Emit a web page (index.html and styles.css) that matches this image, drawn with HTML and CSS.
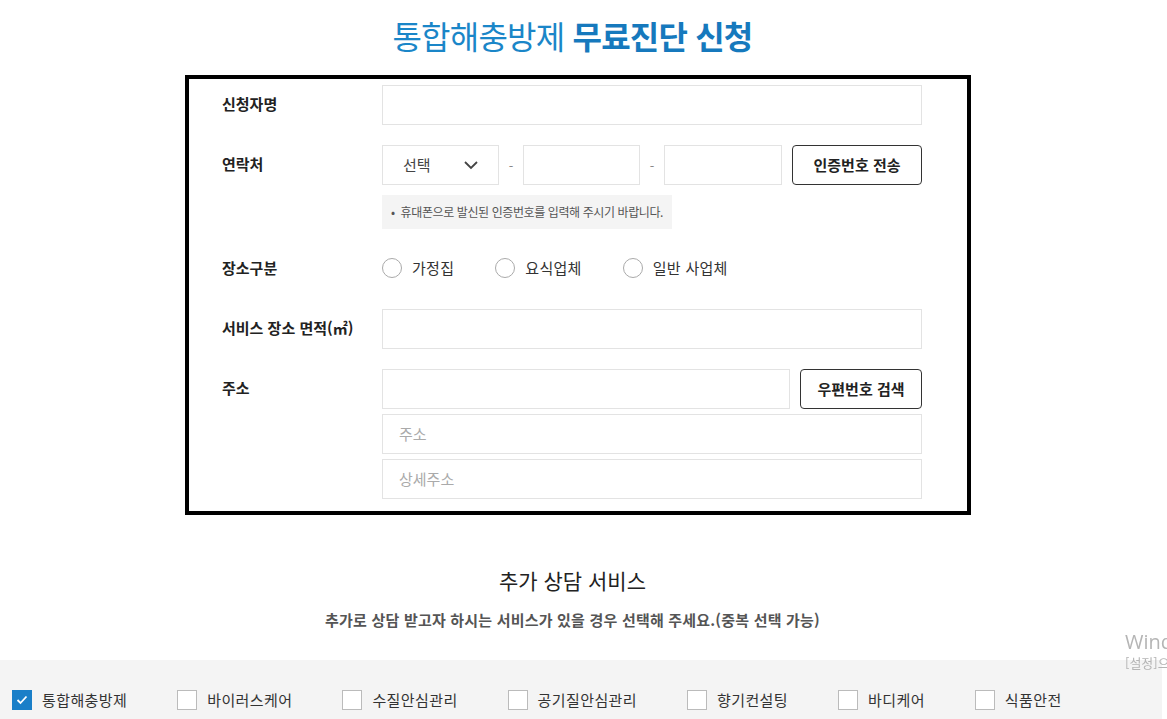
FILE: index.html
```html
<!DOCTYPE html>
<html lang="ko">
<head>
<meta charset="utf-8">
<link rel="stylesheet" href="styles.css">
</head>
<body>
<div class="page">
    <h1 class="title">통합해충방제 <b>무료진단 신청</b></h1>

    <div class="form-box">
        <div class="row">
            <div class="label">신청자명</div>
            <div class="field"><div class="input"></div></div>
        </div>

        <div class="row">
            <div class="label">연락처</div>
            <div class="field">
                <div class="tel">
                    <div class="input select">선택
                        <svg width="14" height="9" viewBox="0 0 14 9"><path d="M1 1l6 6 6-6" fill="none" stroke="#444" stroke-width="1.8"/></svg>
                    </div>
                    <span class="dash">-</span>
                    <div class="input tel-num"></div>
                    <span class="dash">-</span>
                    <div class="input tel-num last"></div>
                    <div class="btn btn-cert">인증번호 전송</div>
                </div>
                <div class="notice">• &nbsp;휴대폰으로 발신된 인증번호를 입력해 주시기 바랍니다.</div>
            </div>
        </div>

        <div class="row">
            <div class="label">장소구분</div>
            <div class="field radios">
                <label class="radio"><span class="circle"></span>가정집</label>
                <label class="radio"><span class="circle"></span>요식업체</label>
                <label class="radio"><span class="circle"></span>일반 사업체</label>
            </div>
        </div>

        <div class="row">
            <div class="label">서비스 장소 면적(㎡)</div>
            <div class="field"><div class="input"></div></div>
        </div>

        <div class="row">
            <div class="label">주소</div>
            <div class="field">
                <div class="zip">
                    <div class="input zip-input"></div>
                    <div class="btn btn-zip">우편번호 검색</div>
                </div>
                <div class="input sub">주소</div>
                <div class="input sub">상세주소</div>
            </div>
        </div>
    </div>

    <h2 class="sub-title">추가 상담 서비스</h2>
    <p class="sub-desc">추가로 상담 받고자 하시는 서비스가 있을 경우 선택해 주세요.(중복 선택 가능)</p>
</div>

<div class="services">
    <label class="check"><span class="box on"><svg width="12" height="10" viewBox="0 0 12 10"><path d="M1.5 5l3 3 6-6.5" fill="none" stroke="#fff" stroke-width="1.8"/></svg></span>통합해충방제</label>
    <label class="check"><span class="box"></span>바이러스케어</label>
    <label class="check"><span class="box"></span>수질안심관리</label>
    <label class="check"><span class="box"></span>공기질안심관리</label>
    <label class="check"><span class="box"></span>향기컨설팅</label>
    <label class="check"><span class="box"></span>바디케어</label>
    <label class="check"><span class="box"></span>식품안전</label>
</div>

<div class="win-mark">
    <div class="win-big">Windows 정품 인증</div>
    <div class="win-small">[설정]으로 이동하여 Windows를 정품 인증합니다.</div>
</div>
</body>
</html>
```

FILE: styles.css
```css
body { margin: 0; font-family: "Noto Sans CJK KR", "Noto Sans", sans-serif; color: #222; background: #fff; overflow: hidden; }
.page { width: 1145px; }

.title { margin: 0; padding-top: 12px; height: 63px; text-align: center; font-size: 32px; font-weight: 400; color: #1a86c8; letter-spacing: -0.8px; line-height: 46px; }
.title b { font-weight: 700; color: #1679bd; }

.form-box { width: 786px; margin-left: 185px; border: 4px solid #000; padding: 6px 45px 12px 33px; box-sizing: border-box; }
.row { display: grid; grid-template-columns: 160px 540px; margin-bottom: 20px; }
.row:last-child { margin-bottom: 0; }
.label { font-size: 15px; font-weight: 700; line-height: 38px; color: #222; }

.input { height: 40px; border: 1px solid #e3e3e3; box-sizing: border-box; font-size: 15px; color: #aaa; line-height: 38px; padding: 0 16px; }
.tel { display: flex; align-items: center; }
.select { width: 117px; color: #444; display: flex; justify-content: space-between; align-items: center; padding: 0 20px; }
.dash { width: 24px; text-align: center; color: #888; font-size: 13px; }
.tel-num { width: 117px; }
.tel-num.last { width: 118px; }
.btn { height: 40px; border: 1px solid #333; border-radius: 4px; box-sizing: border-box; font-size: 15px; font-weight: 700; line-height: 38px; text-align: center; color: #222; }
.btn-cert { width: 130px; margin-left: 10px; }
.notice { width: 290px; height: 34px; margin-top: 10px; background: #f4f4f4; font-size: 12px; line-height: 34px; color: #555; padding-left: 9px; box-sizing: border-box; letter-spacing: -0.4px; white-space: nowrap; }

.radios { display: flex; align-items: center; height: 40px; padding-bottom: 3px; box-sizing: border-box; gap: 41px; }
.radio { display: flex; align-items: center; font-size: 15px; color: #333; letter-spacing: 0.3px; }
.circle { width: 20px; height: 20px; border: 1px solid #aaa; border-radius: 50%; box-sizing: border-box; margin-right: 10px; }

.zip { display: flex; }
.zip-input { width: 408px; }
.btn-zip { width: 122px; margin-left: 10px; }
.sub { margin-top: 5px; }

.sub-title { margin: 50px 0 0; text-align: center; font-size: 21px; font-weight: 400; line-height: 30px; color: #222; }
.sub-desc { margin: 14px 0 0; text-align: center; font-size: 15px; font-weight: 700; color: #555; line-height: 22px; letter-spacing: 0.2px; }

.services { width: 1162px; margin-top: 29px; height: 80px; background: #f4f4f4; display: flex; gap: 50px; padding: 30px 0 0 12px; box-sizing: border-box; }
.check { display: flex; align-items: flex-start; font-size: 15px; color: #333; line-height: 20px; height: 20px; letter-spacing: 0.4px; }
.box { width: 20px; height: 20px; border: 1px solid #bbb; background: #fff; box-sizing: border-box; margin-right: 10px; display: flex; align-items: center; justify-content: center; }
.box.on { background: #1a7fc8; border-color: #1a7fc8; }

.win-mark { position: fixed; left: 1125px; top: 630px; white-space: nowrap; color: #b5b5b5; }
.win-big { font-family: "Open Sans", sans-serif; font-size: 20px; line-height: 24px; }
.win-small { font-size: 13px; line-height: 18px; }
```
